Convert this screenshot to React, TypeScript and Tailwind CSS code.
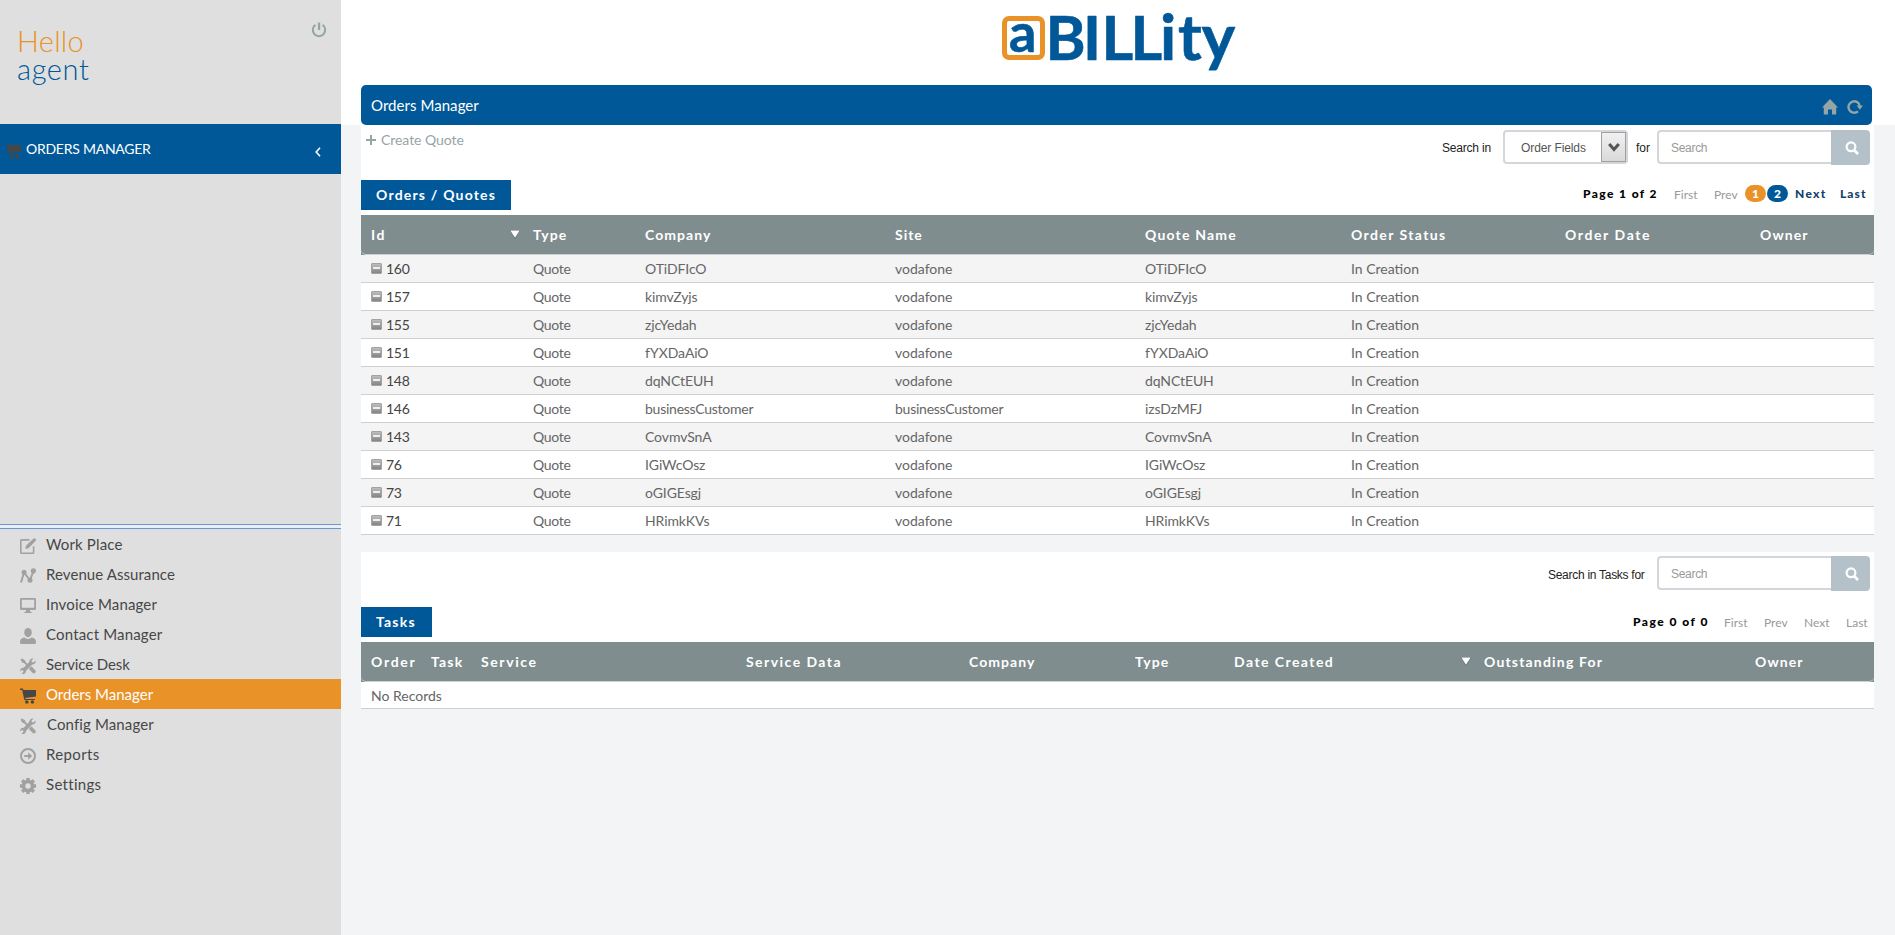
import React from "react";

type IconProps = { className?: string };

const Svg = ({ className, children }: IconProps & { children: React.ReactNode }) => (
  <svg viewBox="0 0 16 16" width="16" height="16" className={className} fill="currentColor">
    {children}
  </svg>
);

const EditIcon = (p: IconProps) => (
  <Svg {...p}>
    <path d="M9.500 1.900H1.600a.8.8 0 0 0-.8.8v11.700c0 .4.4.8.8.8h11.200c.4 0 .8-.4.8-.8V8.200" fill="none" stroke="currentColor" strokeWidth="1.600" />
    <path d="M5.300 11l.6-3.300 7.600-7.200h2.300v2.200l-7.300 7.600z" />
  </Svg>
);
const GraphIcon = (p: IconProps) => (
  <Svg {...p}>
    <path d="M1 14.500L4 4.500l6 7.500 3.500-9" fill="none" stroke="currentColor" strokeWidth="2" />
    <circle cx="4" cy="4.200" r="2.500" />
    <circle cx="10" cy="12.300" r="2.500" />
    <circle cx="13.400" cy="2.800" r="2.600" />
  </Svg>
);
const MonitorIcon = (p: IconProps) => (
  <Svg {...p}>
    <path fillRule="evenodd" d="M1.200 0h13.600C15.500 0 16 .5 16 1.200v9.600c0 .7-.5 1.200-1.200 1.200H10v1.500l1.800.7V15H4.200v-.8l1.800-.7V12H1.200C.5 12 0 11.500 0 10.800V1.200C0 .5.500 0 1.200 0zM1.800 1.800V9.700h12.400V1.800z" />
  </Svg>
);
const UserIcon = (p: IconProps) => (
  <Svg {...p}>
    <ellipse cx="8" cy="4.600" rx="3.800" ry="4.600" />
    <path d="M4.300 9.600c1 .9 2.300 1.400 3.700 1.400s2.700-.5 3.700-1.400c2.600.6 4.300 1.900 4.300 3.900v1c0 .9-.6 1.500-1.500 1.500h-13C.6 16 0 15.400 0 14.500v-1c0-2 1.700-3.300 4.300-3.900z" />
  </Svg>
);
const ToolsIcon = (p: IconProps) => (
  <Svg {...p}>
    <path d="M1 1l1.200-.6 3 2v1.200l3.600 3.600-1.300 1.300L3.900 4.900H2.700L.6 2zM9.300 10.200l1.600-1.600 1 .2 3.500 3.600c1.400 1.600-1.100 4-2.600 2.600l-3.500-3.600z" />
    <path d="M13.600.6l-2 2 .3 1.500 1.500.3 2-2c.6 2-.3 4.300-3.100 4.200L5.900 13c.1 2.500-2.600 3.500-4.300 2.700l1.900-1.900-.4-1.300-1.400-.4-1.300 1.600C-.2 11.200 1 9.400 3.700 9.700l5.600-5.900C9.200 1.200 11.500-.2 13.600.6z" />
  </Svg>
);
const CartIcon = (p: IconProps) => (
  <Svg {...p}>
    <path d="M0 .6h2.900l.6 1.400H16v6.500L5.200 10l.2.900h9.500v1.200H4.300L2.200 2H0z" />
    <circle cx="6.800" cy="14" r="1.800" />
    <circle cx="12.400" cy="14" r="1.800" />
  </Svg>
);
const ReportIcon = (p: IconProps) => (
  <Svg {...p}>
    <circle cx="8" cy="8" r="7" fill="none" stroke="currentColor" strokeWidth="2" />
    <path d="M4.200 7h4V4.300L12.200 8l-4 3.700V9h-4z" />
  </Svg>
);
const GearIcon = (p: IconProps) => (
  <Svg {...p}>
    <circle cx="8" cy="8" r="4.500" fill="none" stroke="currentColor" strokeWidth="3.600" />
    <g stroke="currentColor" strokeWidth="3.400">
      <path d="M8 0v3M8 13v3M0 8h3M13 8h3M2.200 2.200l2 2M11.800 11.800l2 2M2.200 13.800l2-2M11.800 4.200l2-2" />
    </g>
  </Svg>
);
const PowerIcon = (p: IconProps) => (
  <Svg {...p}>
    <path d="M4.400 2.900a6.200 6.200 0 1 0 7.200 0" fill="none" stroke="currentColor" strokeWidth="2" />
    <path d="M6.900.6h2.300V8H6.900z" />
  </Svg>
);
const HomeIcon = (p: IconProps) => (
  <Svg {...p}>
    <path d="M8 0l8 8.500h-1.800V15.500H10V10.500H6v5H1.800V8.500H0z" />
  </Svg>
);
const RefreshIcon = (p: IconProps) => (
  <Svg {...p}>
    <path d="M11 12.300A5.700 5.700 0 1 1 12.900 7.500" fill="none" stroke="currentColor" strokeWidth="2.400" />
    <path d="M9.600 6.600H16l-3.200 4.200z" />
  </Svg>
);
const SearchIcon = (p: IconProps) => (
  <Svg {...p}>
    <circle cx="7" cy="6.800" r="4.400" fill="none" stroke="currentColor" strokeWidth="2.200" />
    <path d="M10 10l4 4" stroke="currentColor" strokeWidth="2.600" />
  </Svg>
);

const SortArrow = () => (
  <svg width="12" height="9" viewBox="0 0 12 9">
    <path d="M.5 0h11L6 9z" fill="#5d6b6c" />
    <path d="M1.300.5h9.400L6 7.800z" fill="#fff" />
  </svg>
);

const Minus = () => (
  <span className="flex h-[11px] w-[11px] shrink-0 items-center justify-center rounded-[1px] border border-[#a3a3a3] bg-gradient-to-b from-[#bdbdbd] to-[#858585]">
    <span className="h-[2px] w-[7px] bg-[#e8f1fa]" />
  </span>
);

const nav = [
  { label: "Work Place", Icon: EditIcon, text: "ml-[10px] tracking-[0.15px]" },
  { label: "Revenue Assurance", Icon: GraphIcon, text: "ml-[10px] tracking-[0.07px]" },
  { label: "Invoice Manager", Icon: MonitorIcon, text: "ml-[10px] tracking-[0.15px]" },
  { label: "Contact Manager", Icon: UserIcon, text: "ml-[10px] tracking-[0.17px]" },
  { label: "Service Desk", Icon: ToolsIcon, text: "ml-[10px] tracking-[-0.1px]" },
  { label: "Orders Manager", Icon: CartIcon, text: "ml-[10px]", active: true },
  { label: "Config Manager", Icon: ToolsIcon, text: "ml-[11px] tracking-[0.12px]" },
  { label: "Reports", Icon: ReportIcon, text: "ml-[10px] tracking-[0.35px]" },
  { label: "Settings", Icon: GearIcon, text: "ml-[10px] tracking-[0.3px]" },
];

const orders = [
  ["160", "OTiDFIcO", "vodafone", "OTiDFIcO"],
  ["157", "kimvZyjs", "vodafone", "kimvZyjs"],
  ["155", "zjcYedah", "vodafone", "zjcYedah"],
  ["151", "fYXDaAiO", "vodafone", "fYXDaAiO"],
  ["148", "dqNCtEUH", "vodafone", "dqNCtEUH"],
  ["146", "businessCustomer", "businessCustomer", "izsDzMFJ"],
  ["143", "CovmvSnA", "vodafone", "CovmvSnA"],
  ["76", "IGiWcOsz", "vodafone", "IGiWcOsz"],
  ["73", "oGIGEsgj", "vodafone", "oGIGEsgj"],
  ["71", "HRimkKVs", "vodafone", "HRimkKVs"],
];

type Column = [label: string, tracking: string];

const orderColumns: Column[] = [
  ["Id", "tracking-[1.500px]"],
  ["Type", "tracking-[1.100px]"],
  ["Company", "tracking-[1.050px]"],
  ["Site", "tracking-[1px]"],
  ["Quote Name", "tracking-[1.200px]"],
  ["Order Status", "tracking-[1.400px]"],
  ["Order Date", "tracking-[1.600px]"],
  ["Owner", "tracking-[1.100px]"],
];

const taskColumns: Column[] = [
  ["Order", "tracking-[1.700px]"],
  ["Task", "tracking-[1.200px]"],
  ["Service", "tracking-[1.600px]"],
  ["Service Data", "tracking-[1.450px]"],
  ["Company", "tracking-[1.050px]"],
  ["Type", "tracking-[1.100px]"],
  ["Date Created", "tracking-[1.450px]"],
  ["Outstanding For", "tracking-[1.180px]"],
  ["Owner", "tracking-[1.100px]"],
];

const orderGrid = "grid grid-cols-[162px_112px_250px_250px_206px_214px_195px_124px]";
const taskGrid = "grid grid-cols-[60px_50px_265px_223px_166px_99px_250px_271px_129px]";

const HeaderRow = ({ grid, columns, sorted }: { grid: string; columns: Column[]; sorted: number }) => (
  <div className="h-[40px] bg-[#7f8d8f]">
    <div className={`${grid} h-[40px] rounded-b-[5px] border-b border-[#cdd1d1] text-[14px] leading-[39px] font-bold text-white`}>
      {columns.map(([label, tracking], i) => (
        <div key={label} className={`flex justify-between pr-[2px] pl-[10px] whitespace-nowrap ${tracking}`}>
          {label}
          {i === sorted && (
            <span className="pt-[15px] leading-none">
              <SortArrow />
            </span>
          )}
        </div>
      ))}
    </div>
  </div>
);

const SearchBox = () => (
  <div className="flex h-[35px] w-[213px]">
    <div className="h-[34px] w-[174px] rounded-l-[4px] border-2 border-r-0 border-[#d3d6db] bg-white pl-[12px] font-['Liberation_Sans',sans-serif] text-[12px] leading-[32px] tracking-[-0.3px] text-[#999]">
      Search
    </div>
    <div className="flex flex-1 items-center justify-center rounded-r-[4px] bg-[#b5c1c9] pl-[2px] text-white">
      <SearchIcon />
    </div>
  </div>
);

const Tab = ({ children }: { children: React.ReactNode }) => (
  <div className="h-[30px] bg-[#005899] px-[15px] text-[14px] leading-[30px] font-bold tracking-[1.200px] whitespace-nowrap text-white">{children}</div>
);

export default function App() {
  return (
    <div className="flex h-[935px] w-[1895px] overflow-hidden bg-[#f3f4f6] font-['Lato',sans-serif]">
      <aside className="flex w-[341px] shrink-0 flex-col bg-[#dfdfdf]">
        <div className="flex h-[124px] justify-between pt-[22px] pr-[14px] pl-[17px]">
          <div className="pt-[5px] text-[29px] leading-[28px] font-light">
            <div className="tracking-[0.3px] text-[#e89228]">Hello</div>
            <div className="tracking-[0.600px] text-[#005899]">agent</div>
          </div>
          <PowerIcon className="text-[#95a5a6]" />
        </div>
        <div className="flex h-[50px] items-center bg-[#005899] pr-[20px] pl-[5px] text-white">
          <CartIcon className="mt-[4px] text-[#474747]" />
          <span className="mb-[2px] ml-[5px] text-[14px] tracking-[-0.25px]">ORDERS MANAGER</span>
          <svg className="mt-[6px] ml-auto" width="6" height="10" viewBox="0 0 6 10">
            <path d="M5 .8L1.200 5 5 9.200" fill="none" stroke="#fff" strokeWidth="1.600" />
          </svg>
        </div>
        <div className="h-[350px]" />
        <div className="h-[5px] border-y border-[#6b98d4] bg-[#e9eff8]" />
        <nav>
          {nav.map(({ label, Icon, text, active }) => (
            <div
              key={label}
              className={`flex h-[30px] items-start pl-[20px] text-[15px] leading-[31px] ${active ? "bg-[#e89228] text-white" : "text-[#474747]"}`}
            >
              <Icon className={active ? "mt-[9px] text-[#474747]" : "mt-[9px] text-[#a1a1a1]"} />
              <span className={text}>{label}</span>
            </div>
          ))}
        </nav>
      </aside>

      <main className="flex-1">
        <div className="h-[125px] bg-white pr-[23px] pl-[20px]">
          <div className="flex h-[85px] justify-center">
            <svg width="241" height="85" viewBox="0 0 241 85">
              <rect x="8.500" y="18.500" width="38" height="39" rx="4.500" fill="none" stroke="#e89228" strokeWidth="5" />
              <g fontFamily="Lato" fontWeight="700" fill="#005899" stroke="#005899" strokeWidth="0.600" strokeLinejoin="round">
                <text x="13" y="51.500" fontSize="54">a</text>
                <text x="49.500 87 105.500 134.500" y="60" fontSize="61">BILL</text>
                <text x="164 182 205.500" y="60" fontSize="64">ity</text>
              </g>
            </svg>
          </div>
          <div className="flex h-[40px] items-center justify-between rounded-[5px] bg-[#005899] pr-[9px] pl-[10px] text-[15px] text-white">
            <span className="tracking-[0.05px]">Orders Manager</span>
            <span className="mt-[4px] flex gap-[9px] text-[#95a5a6]">
              <HomeIcon />
              <RefreshIcon />
            </span>
          </div>
        </div>

        <div className="w-[1533px] pl-[20px]">
          <section className="bg-white">
            <div className="flex h-[55px] justify-between pr-[4px] pl-[5px]">
              <div className="flex h-[30px] items-center text-[14px] text-[#95a5a6]">
                <svg width="10" height="10" viewBox="0 0 10 10">
                  <path d="M5 0v10M0 5h10" stroke="#95a5a6" strokeWidth="2" />
                </svg>
                <span className="mb-px ml-[5px] tracking-[-0.05px]">Create Quote</span>
              </div>
              <div className="flex pt-[5px] font-['Liberation_Sans',sans-serif] text-[12px] leading-[36px] text-[#222]">
                <span className="w-[61px] tracking-[-0.2px]">Search in</span>
                <div className="flex h-[34px] w-[125px] rounded-[4px] border-2 border-[#d3d6db] bg-white leading-[32px] text-[#555]">
                  <span className="flex-1 pl-[16px] tracking-[-0.1px]">Order Fields</span>
                  <span className="flex w-[25px] items-center justify-center border border-[#a0a0a0] bg-gradient-to-b from-[#f1f1f1] to-[#d9d9d9]">
                    <svg width="12" height="9" viewBox="0 0 12 9">
                      <path d="M1.200 1L6 6.500 10.800 1" fill="none" stroke="#555" strokeWidth="3" />
                    </svg>
                  </span>
                </div>
                <span className="ml-[8px] w-[21px]">for</span>
                <SearchBox />
              </div>
            </div>
            <div className="flex h-[35px] justify-between">
              <div className="w-[150px]">
                <Tab>Orders / Quotes</Tab>
              </div>
              <div className="flex items-start pt-[5px] text-[12px] leading-[17px] font-black whitespace-nowrap text-[#11426e]">
                <span className="w-[91px] tracking-[1.400px] text-black">Page 1 of 2</span>
                <span className="mt-px w-[40px] font-normal text-[#999]">First</span>
                <span className="mt-px w-[31px] font-normal text-[#999]">Prev</span>
                <span className="mr-px w-[21px] rounded-full bg-[#e89228] text-center text-white">1</span>
                <span className="mr-[7px] w-[21px] rounded-full bg-[#005899] text-center text-white">2</span>
                <span className="w-[45px] tracking-[1.300px]">Next</span>
                <span className="w-[34px] tracking-[1.100px]">Last</span>
              </div>
            </div>
            <HeaderRow grid={orderGrid} sorted={0} columns={orderColumns} />
            {orders.map(([id, company, site, quote], i) => (
              <div
                key={id}
                className={`${orderGrid} h-[28px] border-b border-[#cfcfcf] text-[14px] leading-[28px] text-[#666] *:pl-[10px] ${i % 2 ? "bg-white" : "bg-[#f4f4f4]"}`}
              >
                <div className="flex items-start text-[#444]">
                  <span className="flex h-[26px] items-center">
                    <Minus />
                  </span>
                  <span className="ml-[4px] tracking-[-0.3px]">{id}</span>
                </div>
                <div className="tracking-[-0.3px]">Quote</div>
                <div className={company.length > 8 ? "tracking-[-0.25px]" : "tracking-[-0.1px]"}>{company}</div>
                <div className={site.length > 8 ? "tracking-[-0.25px]" : ""}>{site}</div>
                <div className="tracking-[-0.1px]">{quote}</div>
                <div>In Creation</div>
                <div />
                <div />
              </div>
            ))}
          </section>

          <section className="mt-[17px] bg-white">
            <div className="flex h-[55px] justify-end pt-[4px] pr-[4px] font-['Liberation_Sans',sans-serif] text-[12px] leading-[38px] text-[#222]">
              <span className="w-[109px] tracking-[-0.28px]">Search in Tasks for</span>
              <SearchBox />
            </div>
            <div className="flex h-[35px] justify-between">
              <div className="w-[71px]">
                <Tab>Tasks</Tab>
              </div>
              <div className="flex items-start pt-[6px] text-[12px] leading-[17px] whitespace-nowrap text-[#999]">
                <span className="w-[91px] font-black tracking-[1.500px] text-black">Page 0 of 0</span>
                <span className="mt-px w-[40px]">First</span>
                <span className="mt-px w-[40px]">Prev</span>
                <span className="mt-px w-[42px]">Next</span>
                <span className="mt-px w-[28px]">Last</span>
              </div>
            </div>
            <HeaderRow grid={taskGrid} sorted={6} columns={taskColumns} />
            <div className="h-[27px] border-b border-[#cfcfcf] pl-[10px] text-[14px] leading-[27px] text-[#666]">No Records</div>
          </section>
        </div>
      </main>
    </div>
  );
}
